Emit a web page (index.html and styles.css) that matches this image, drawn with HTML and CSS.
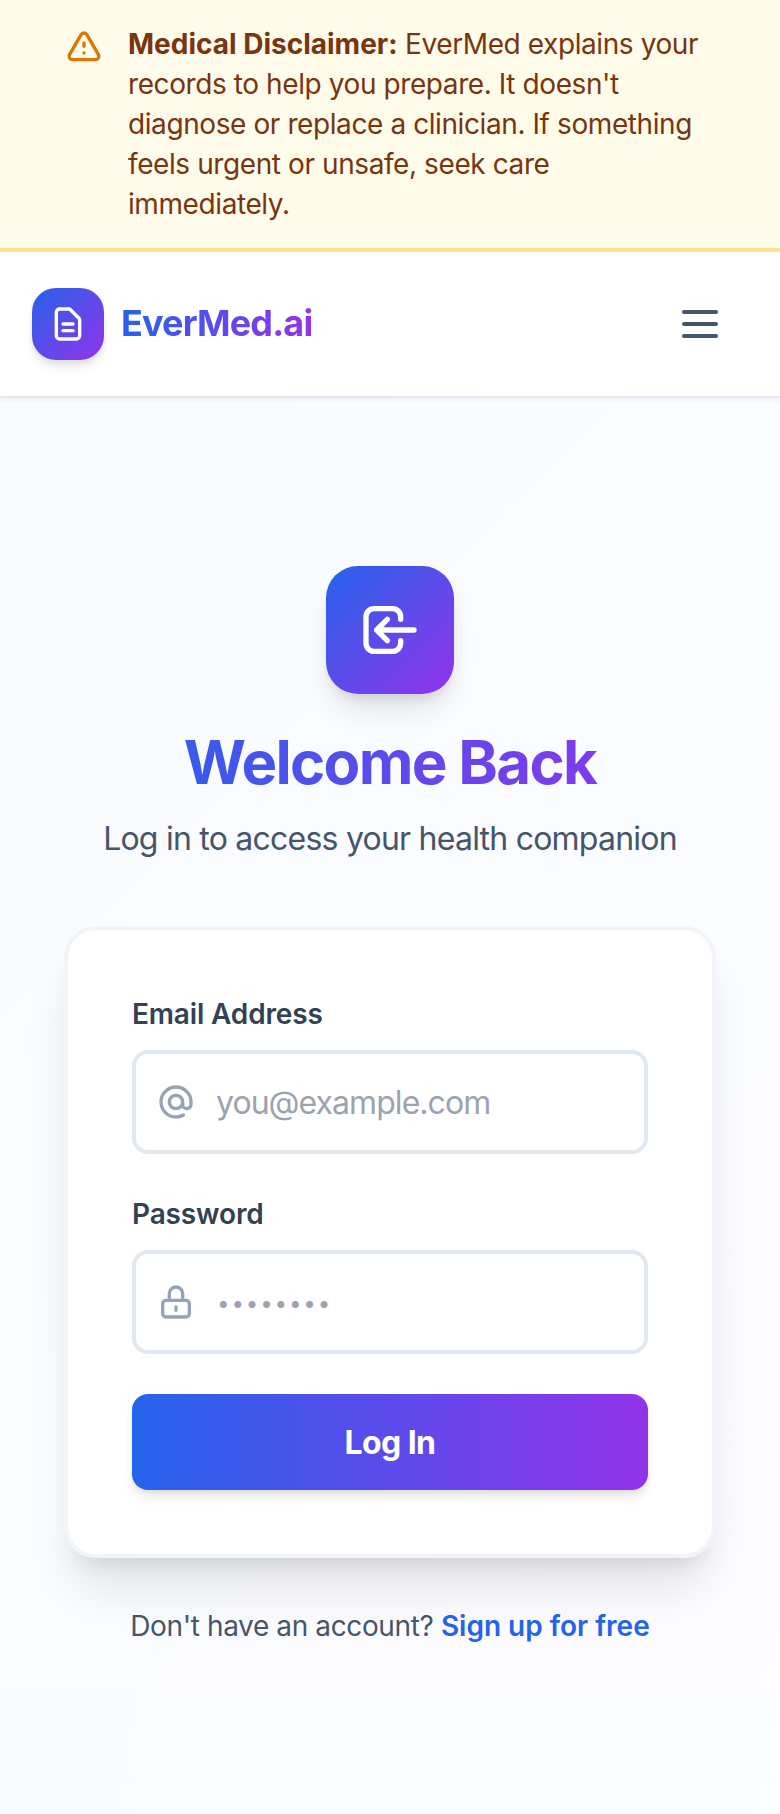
FILE: index.html
```html
<!DOCTYPE html>
<html lang="en">
<head>
<meta charset="utf-8">
<title>EverMed.ai – Log In</title>
<link rel="stylesheet" href="styles.css">
</head>
<body>
<aside class="banner">
  <svg class="banner-icon" viewBox="0 0 24 24"><path d="M12 9v2m0 4h.01m-6.938 4h13.856c1.54 0 2.502-1.667 1.732-3L13.732 4c-.77-1.333-2.694-1.333-3.464 0L3.34 16c-.77 1.333.192 3 1.732 3z"/></svg>
  <p class="banner-text"><strong>Medical Disclaimer:</strong> EverMed explains your records to help you prepare. It doesn't diagnose or replace a clinician. If something feels urgent or unsafe, seek care immediately.</p>
</aside>
<header class="header">
  <a class="brand">
    <span class="brand-tile"><svg class="brand-icon" viewBox="0 0 24 24"><path d="M9 12h6m-6 4h6m2 5H7a2 2 0 01-2-2V5a2 2 0 012-2h5.586a1 1 0 01.707.293l5.414 5.414a1 1 0 01.293.707V19a2 2 0 01-2 2z"/></svg></span>
    <span class="brand-name">EverMed.ai</span>
  </a>
  <button class="menu" aria-label="Menu"><svg class="menu-icon" viewBox="0 0 24 24"><path d="M4 6h16M4 12h16M4 18h16"/></svg></button>
</header>
<main class="main">
  <div class="hero-tile"><svg class="hero-icon" viewBox="0 0 24 24"><path d="M11 16l-4-4m0 0l4-4m-4 4h14m-5 4v1a3 3 0 01-3 3H6a3 3 0 01-3-3V7a3 3 0 013-3h7a3 3 0 013 3v1"/></svg></div>
  <h1 class="title">Welcome Back</h1>
  <p class="subtitle">Log in to access your health companion</p>
  <form class="card">
    <label class="label" for="email">Email Address</label>
    <div class="field">
      <svg class="field-icon" viewBox="0 0 24 24"><path d="M16 12a4 4 0 10-8 0 4 4 0 008 0zm0 0v1.5a2.5 2.5 0 005 0V12a9 9 0 10-9 9m4.5-1.206a8.959 8.959 0 01-4.5 1.207"/></svg>
      <input class="input" id="email" type="email" placeholder="you@example.com">
    </div>
    <label class="label" for="password">Password</label>
    <div class="field">
      <svg class="field-icon" viewBox="0 0 24 24"><path d="M12 15v2m-6 4h12a2 2 0 002-2v-6a2 2 0 00-2-2H6a2 2 0 00-2 2v6a2 2 0 002 2zm10-10V7a4 4 0 00-8 0v4h8z"/></svg>
      <input class="input input-password" id="password" type="password" placeholder="••••••••">
    </div>
    <button class="submit" type="button">Log In</button>
  </form>
  <p class="signup">Don't have an account? <a class="signup-link">Sign up for free</a></p>
</main>
</body>
</html>
```
FILE: styles.css
```css
* { box-sizing: border-box; margin: 0; }
body {
  font-family: Inter, sans-serif;
  min-height: 1814px;
  display: flex;
  flex-direction: column;
  color: #475569;
  background: linear-gradient(100deg, #f9fafc, #fcfdff);
}
svg { display: block; flex: none; fill: none; stroke: currentColor; stroke-width: 2; stroke-linecap: round; stroke-linejoin: round; }
button { border: 0; font-family: inherit; }

.banner {
  display: flex;
  align-items: flex-start;
  gap: 24px;
  padding: 24px 64px;
  border-bottom: 4px solid #fde68a;
  background: linear-gradient(90deg, #fffbeb, #fefce8);
}
.banner-icon { width: 40px; height: 40px; margin-top: 4px; color: #d97706; }
.banner-text { font-size: 28px; line-height: 40px; letter-spacing: -.41px; color: #78350f; }
.banner-text strong { letter-spacing: 0; }

.header {
  display: flex;
  align-items: center;
  justify-content: space-between;
  height: 146px;
  padding: 0 32px;
  background: #fff;
  border-bottom: 2px solid #e2e8f0;
  box-shadow: 0 2px 4px rgba(0, 0, 0, .05);
  z-index: 1;
}
.brand { display: flex; align-items: center; gap: 17px; }
.brand-tile {
  display: grid;
  place-items: center;
  width: 72px;
  height: 72px;
  border-radius: 24px;
  color: #fff;
  background: linear-gradient(135deg, #2563eb, #9333ea);
  box-shadow: 0 8px 12px -2px rgba(0, 0, 0, .1), 0 4px 8px -4px rgba(0, 0, 0, .1);
}
.brand-icon { width: 40px; height: 40px; }
.brand-name {
  padding-bottom: 2px;
  font-size: 36px;
  line-height: 56px;
  font-weight: 700;
  letter-spacing: -.85px;
  color: transparent;
  background: linear-gradient(90deg, #2563eb, #9333ea);
  background-clip: text;
  -webkit-background-clip: text;
}
.menu { padding: 24px; background: none; color: #475569; }
.menu-icon { width: 48px; height: 48px; }

.main {
  display: flex;
  flex-direction: column;
  align-items: center;
  height: 1290px;
  padding: 168px 64px 0;
  background: linear-gradient(135deg, #f9fafc, #fbfcff 50%, #fdfcff);
}
.hero-tile {
  display: grid;
  place-items: center;
  width: 128px;
  height: 128px;
  margin-bottom: 32px;
  border-radius: 32px;
  color: #fff;
  background: linear-gradient(135deg, #2563eb, #9333ea);
  box-shadow: 0 20px 30px -6px rgba(0, 0, 0, .1), 0 8px 12px -4px rgba(0, 0, 0, .1);
}
.hero-icon { width: 64px; height: 64px; }
.title {
  align-self: stretch;
  margin-bottom: 16px;
  font-size: 60px;
  line-height: 72px;
  font-weight: 700;
  letter-spacing: -1.7px;
  text-align: center;
  color: transparent;
  background: linear-gradient(90deg, #2563eb, #9333ea);
  background-clip: text;
  -webkit-background-clip: text;
}
.subtitle { padding-top: 1px; margin-bottom: 63px; font-size: 32px; line-height: 48px; letter-spacing: -.77px; white-space: nowrap; }

.card {
  align-self: stretch;
  padding: 64px;
  border: 4px solid #f1f5f9;
  border-radius: 32px;
  background: #fff;
  box-shadow: 0 40px 50px -10px rgba(0, 0, 0, .1), 0 16px 20px -12px rgba(0, 0, 0, .1);
}
.label { display: block; margin-bottom: 16px; font-size: 28px; line-height: 40px; font-weight: 600; letter-spacing: -.15px; color: #334155; }
.field {
  display: flex;
  align-items: center;
  gap: 20px;
  height: 104px;
  margin-bottom: 40px;
  padding: 0 20px;
  border: 4px solid #e2e8f0;
  border-radius: 16px;
  background: #fff;
}
.field-icon { width: 40px; height: 40px; color: #94a3b8; }
.input { flex: 1; min-width: 0; padding: 2px 0 0; border: 0; outline: 0; background: none; font: 32px/48px Inter, sans-serif; letter-spacing: -.95px; }
.input::placeholder { color: #9ca3af; opacity: 1; }
.input-password { padding-left: 1px; font-size: 22.4px; letter-spacing: 1.8px; }
.submit {
  display: block;
  width: 100%;
  height: 96px;
  padding: 2px 0 0;
  border-radius: 16px;
  font-size: 32px;
  line-height: 48px;
  font-weight: 700;
  letter-spacing: -.6px;
  color: #fff;
  background: linear-gradient(90deg, #2563eb, #9333ea);
  box-shadow: 0 8px 12px -2px rgba(0, 0, 0, .1), 0 4px 8px -4px rgba(0, 0, 0, .1);
}
.signup { margin-top: 48px; font-size: 28px; line-height: 40px; letter-spacing: -.38px; white-space: nowrap; }
.signup-link { font-weight: 600; letter-spacing: 0; color: #2563eb; }
```
